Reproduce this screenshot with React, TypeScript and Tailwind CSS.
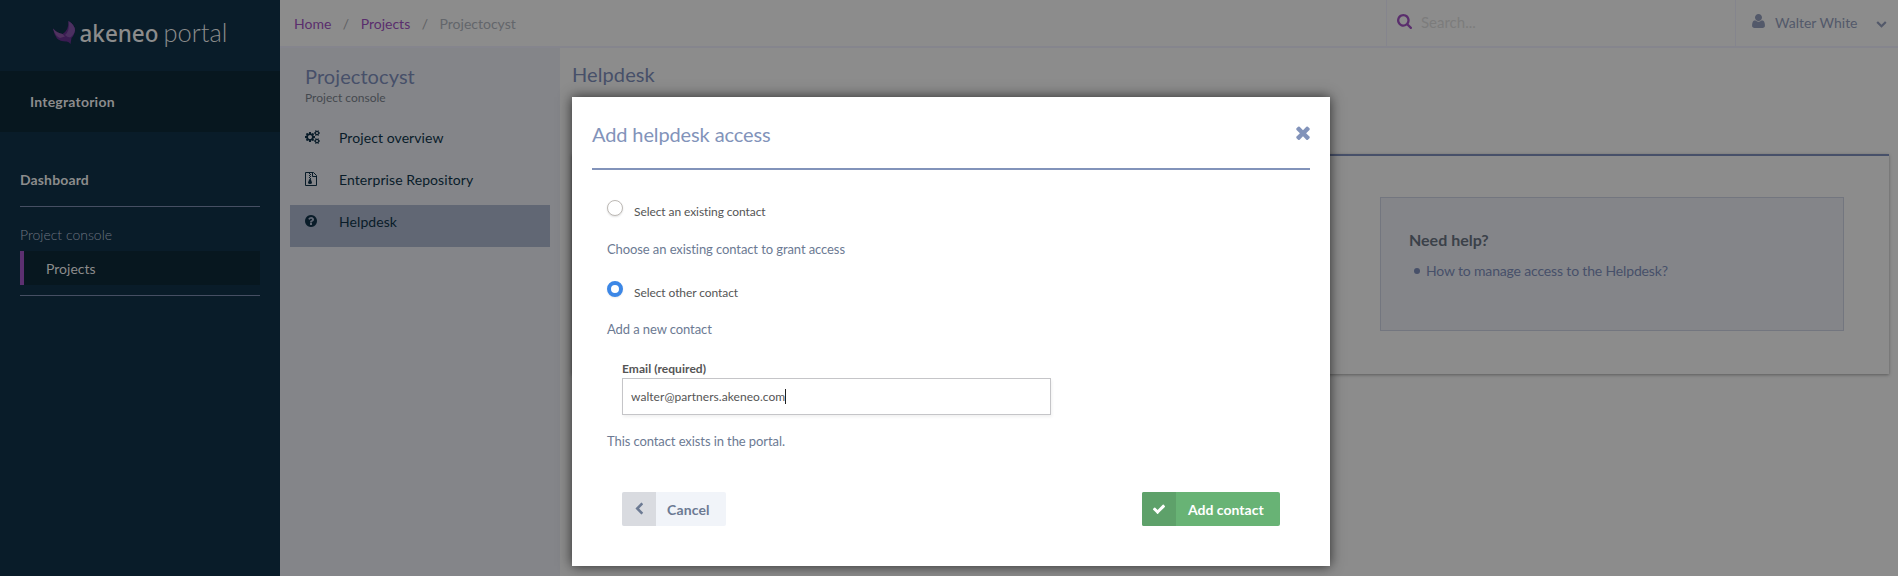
import type { ReactNode } from "react";

const paths = {
  cogs: "M896 896q0-106-75-181t-181-75-181 75-75 181 75 181 181 75 181-75 75-181zm768 512q0-52-38-90t-90-38-90 38-38 90q0 53 37.5 90.5t90.5 37.5 90.5-37.5 37.5-90.5zm0-1024q0-52-38-90t-90-38-90 38-38 90q0 53 37.5 90.5t90.5 37.5 90.5-37.5 37.5-90.5zm-384 421v185q0 10-7 19.5t-16 10.5l-155 24q-11 35-32 76 34 48 90 115 7 11 7 20 0 12-7 19-23 30-82.5 89.5t-78.5 59.5q-11 0-21-7l-115-90q-37 19-77 31-11 108-23 155-7 24-30 24h-186q-11 0-20-7.5t-10-17.5l-23-153q-34-10-75-31l-118 89q-7 7-20 7-11 0-21-8-144-133-144-160 0-9 7-19 10-14 41-53t47-61q-23-44-35-82l-152-24q-10-1-17-9.5t-7-19.5v-185q0-10 7-19.5t16-10.5l155-24q11-35 32-76-34-48-90-115-7-11-7-20 0-12 7-20 22-30 82-89t79-59q11 0 21 7l115 90q34-18 77-32 11-108 23-154 7-24 30-24h186q11 0 20 7.5t10 17.5l23 153q34 10 75 31l118-89q8-7 20-7 11 0 21 8 144 133 144 160 0 8-7 19-12 16-42 54t-45 60q23 48 34 82l152 23q10 2 17 10.5t7 19.5zm640 533v140q0 16-149 31-12 27-30 52 51 113 51 138 0 4-4 7-122 71-124 71-8 0-46-47t-52-68q-20 2-30 2t-30-2q-14 21-52 68t-46 47q-2 0-124-71-4-3-4-7 0-25 51-138-18-25-30-52-149-15-149-31v-140q0-16 149-31 13-29 30-52-51-113-51-138 0-4 4-7 4-2 35-20t59-34 30-16q8 0 46 46.5t52 67.5q20-2 30-2t30 2q51-71 92-112l6-2q4 0 124 70 4 3 4 7 0 25-51 138 17 23 30 52 149 15 149 31zm0-1024v140q0 16-149 31-12 27-30 52 51 113 51 138 0 4-4 7-122 71-124 71-8 0-46-47t-52-68q-20 2-30 2t-30-2q-14 21-52 68t-46 47q-2 0-124-71-4-3-4-7 0-25 51-138-18-25-30-52-149-15-149-31v-140q0-16 149-31 13-29 30-52-51-113-51-138 0-4 4-7 4-2 35-20t59-34 30-16q8 0 46 46.5t52 67.5q20-2 30-2t30 2q51-71 92-112l6-2q4 0 124 70 4 3 4 7 0 25-51 138 17 23 30 52 149 15 149 31z",
  question: "M1024 1376v-192q0-14-9-23t-23-9h-192q-14 0-23 9t-9 23v192q0 14 9 23t23 9h192q14 0 23-9t9-23zm256-672q0-88-55.5-163t-138.5-116-170-41q-243 0-371 213-15 24 8 42l132 100q7 6 19 6 16 0 25-12 53-68 86-92 34-24 86-24 48 0 85.5 26t37.5 59q0 38-20 61t-68 45q-63 28-115.5 86.5t-52.5 125.5v36q0 14 9 23t23 9h192q14 0 23-9t9-23q0-19 21.5-49.5t54.5-49.5q32-18 49-28.5t46-35 44.5-48 28-60.5 12.5-81zm384 192q0 209-103 385.5t-279.5 279.5-385.5 103-385.5-103-279.5-279.5-103-385.5 103-385.5 279.5-279.5 385.5-103 385.5 103 279.5 279.5 103 385.5z",
  search: "M1216 832q0-185-131.5-316.5t-316.5-131.5-316.5 131.5-131.5 316.5 131.5 316.5 316.5 131.5 316.5-131.5 131.5-316.5zm512 832q0 52-38 90t-90 38q-54 0-90-38l-343-342q-179 124-399 124-143 0-273.5-55.5t-225-150-150-225-55.5-273.5 55.5-273.5 150-225 225-150 273.5-55.5 273.5 55.5 225 150 150 225 55.5 273.5q0 220-124 399l343 343q37 37 37 90z",
  user: "M1600 1405q0 120-73 189.5t-194 69.5h-874q-121 0-194-69.5t-73-189.5q0-53 3.5-103.5t14-109 26.5-108.500 43-97.500 62-81 85.500-53.500 111.500-20q9 0 42 21.500t74.500 48 108 48 133.500 21.500 133.500-21.500 108-48 74.500-48 42-21.500q61 0 111.500 20t85.500 53.500 62 81 43 97.500 26.500 108.500 14 109 3.500 103.500zm-320-893q0 159-112.500 271.500t-271.500 112.500-271.500-112.500-112.500-271.500 112.500-271.500 271.500-112.500 271.500 112.500 112.500 271.500z",
  down: "M1683 808l-742 741q-19 19-45 19t-45-19l-742-741q-19-19-19-45.5t19-45.5l166-165q19-19 45-19t45 19l531 531 531-531q19-19 45-19t45 19l166 165q19 19 19 45.5t-19 45.5z",
  left: "M1427 301l-531 531 531 531q19 19 19 45t-19 45l-166 166q-19 19-45 19t-45-19l-742-742q-19-19-19-45t19-45l742-742q19-19 45-19t45 19l166 166q19 19 19 45t-19 45z",
  times: "M1490 1322q0 40-28 68l-136 136q-28 28-68 28t-68-28l-294-294-294 294q-28 28-68 28t-68-28l-136-136q-28-28-28-68t28-68l294-294-294-294q-28-28-28-68t28-68l136-136q28-28 68-28t68 28l294 294 294-294q28-28 68-28t68 28l136 136q28 28 28 68t-28 68l-294 294 294 294q28 28 28 68z",
  check: "M1671 566q0 40-28 68l-724 724-136 136q-28 28-68 28t-68-28l-136-136-362-362q-28-28-28-68t28-68l136-136q28-28 68-28t68 28l294 295 656-657q28-28 68-28t68 28l136 136q28 28 28 68z",
};

function Icon({ d, box, className }: { d: string; box: string; className: string }) {
  return (
    <svg viewBox={box} className={className} fill="currentColor">
      <path d={d} />
    </svg>
  );
}

function Logo() {
  return (
    <svg viewBox="0 0 280 71" className="block h-[71px] w-[280px]">
      <path d="M53 28.500Q57 33 62.500 34Q69 30 68.500 21Q75 25 75 30.500Q74 36 71.500 38L70.500 44Q68.500 41 66 41.500Q60 41.500 57 38.500Q54 34.500 53 28.500Z" fill="#3a1c52" />
      <path d="M68.500 21Q75 25 75 30.500Q74 35 70 37.500Q67 37 65 35Q70 31 68.500 21Z" fill="#4b3060" />
      <path d="M53 28.500Q57 33 62.500 34L65 36.500L60 38Q55 36 53 28.500Z" fill="#50325f" />
      <text x="79.500" y="41.500" fontSize="24" fontWeight="500" textLength="79" lengthAdjust="spacingAndGlyphs" fill="#8c8c8c" className="font-['Noto_Sans',sans-serif]">akeneo</text>
      <text x="163.500" y="41.500" fontSize="25" fontWeight="300" textLength="64" lengthAdjust="spacingAndGlyphs" fill="#8c8c8c" className="font-['Lato',sans-serif]">portal</text>
    </svg>
  );
}

function Sidebar() {
  return (
    <aside className="flex w-[280px] shrink-0 flex-col bg-[#091c29] text-sm text-[#8c8c8c]">
      <Logo />
      <div className="flex h-[61px] items-center bg-[#07171f] pl-[30px] font-bold tracking-[0.22px]">Integratorion</div>
      <nav className="px-5 pt-[38px]">
        <div className="h-[37px] border-b border-[#464f63] leading-5 font-bold tracking-[0.13px]">Dashboard</div>
        <div className="mt-[18px] leading-5 font-light text-[#6d7480]">Project console</div>
        <div className="mt-[6px] h-[34px] border-l-4 border-[#5c3070] bg-[#07171f] pl-[22px] leading-[36px]">Projects</div>
        <div className="mt-[10px] border-b border-[#464f63]" />
      </nav>
    </aside>
  );
}

function TopBar() {
  return (
    <header className="flex h-12 shrink-0 border-b-2 border-[#85858d] text-sm">
      <div className="flex flex-1 pt-[14px] pl-[14px] leading-5 text-[#5a2e6d]">
        <span>Home</span>
        <span className="mx-[11.5px] text-[#5f6063]">/</span>
        <span>Projects</span>
        <span className="mx-[11.5px] text-[#5f6063]">/</span>
        <span className="text-[#63666b]">Projectocyst</span>
      </div>
      <div className="flex w-[349px] border-l border-[#85858d] pl-[10px]">
        <Icon d={paths.search} box="64 128 1664 1664" className="mt-[14px] size-[15px] text-[#5a2e6d]" />
        <span className="mt-[12px] ml-[9px] text-[15px] leading-5 text-[#7c7c7c]">Search...</span>
      </div>
      <div className="flex w-[163px] border-l border-[#85858d] pl-4 text-[#53596a]">
        <Icon d={paths.user} box="192 128 1408 1536" className="mt-[14px] h-[14px] w-[13px]" />
        <span className="mt-[13px] ml-[10px] leading-5">Walter White</span>
        <Icon d={paths.down} box="0 0 1792 1792" className="mt-[18px] ml-[18px] size-[11px]" />
      </div>
    </header>
  );
}

function MenuItem({ icon, label, active = false }: { icon: ReactNode; label: string; active?: boolean }) {
  return (
    <div className={active ? "flex h-[42px] bg-[#616774] pl-[15px]" : "flex h-[42px] pl-[15px]"}>
      <span className={active ? "w-[34px] pt-[10px]" : "w-[34px] pt-[9px]"}>{icon}</span>
      <span className="pt-[7px] leading-5 tracking-[0.08px]">{label}</span>
    </div>
  );
}

function ProjectMenu() {
  return (
    <section className="w-[280px] shrink-0 bg-[#848589] px-[10px] pt-[14px] text-sm text-[#091c29]">
      <h2 className="pl-[15px] text-xl leading-7 tracking-[0.08px] text-[#475069]">Projectocyst</h2>
      <p className="pl-[15px] text-xs leading-4 text-[#44494f]">Project console</p>
      <div className="mt-[15px]">
        <MenuItem icon={<Icon d={paths.cogs} box="0 0 1920 1792" className="h-[14px] w-[15px]" />} label="Project overview" />
        <MenuItem
          icon={
            <svg viewBox="0 0 12 14" className="h-[14px] w-3" fill="none" stroke="currentColor">
              <path d="M.5.5h8l3 3v10H.5zM7.500.5v4h4" />
              <path d="M4 1.500h1M5 2.500h1M4 3.500h1M5 4.500h1M4 5.500h1M5 6.500h1" />
              <path d="M4.500 7h1.200l1.300 3.500q0 1.500-2 1.500t-2-1.500z" fill="currentColor" stroke="none" />
            </svg>
          }
          label="Enterprise Repository"
        />
        <MenuItem active icon={<Icon d={paths.question} box="128 128 1536 1536" className="size-3" />} label="Helpdesk" />
      </div>
    </section>
  );
}

function HelpCard() {
  return (
    <div className="mt-[66px] flex h-[220px] justify-end border-t-2 border-[#475069] pt-[41px] pr-[45px] shadow-[0_1px_3px_rgba(0,0,0,0.35)]">
      <div className="h-[134px] w-[464px] border border-[#73767f] bg-[#848589] pt-[30px] pl-[28px]">
        <h3 className="text-base leading-6 font-bold text-[#3b4149]">Need help?</h3>
        <ul className="mt-[9px] text-sm leading-5 tracking-[-0.16px] text-[#475069]">
          <li className="flex items-center">
            <span className="mr-[6px] ml-[5px] size-[6px] rounded-full bg-[#475069]" />
            How to manage access to the Helpdesk?
          </li>
        </ul>
      </div>
    </div>
  );
}

function Radio({ label, checked = false }: { label: string; checked?: boolean }) {
  return (
    <label className="flex h-6 text-xs tracking-[-0.08px] text-[#555]">
      <span
        className={
          checked
            ? "size-4 rounded-full border-4 border-[#3c87e6] bg-white shadow-[0_1px_2px_rgba(0,0,0,0.08)]"
            : "size-4 rounded-full border border-[#bdb9b5] bg-white shadow-[0_1px_2px_rgba(0,0,0,0.12)]"
        }
      />
      <span className="ml-[11px] pt-[4px] leading-4">{label}</span>
    </label>
  );
}

function Modal() {
  return (
    <div className="absolute top-[97px] left-[572px] h-[469px] w-[758px] bg-white px-5 text-[13px] text-[#6c7a93] shadow-[0_0_12px_rgba(0,0,0,0.7)]">
      <div className="flex h-[73px] justify-between border-b-2 border-[#8293ba] text-[#8293ba]">
        <h1 className="pt-[23px] text-xl leading-7 tracking-[-0.12px]">Add helpdesk access</h1>
        <Icon d={paths.times} box="302 238 1188 1316" className="mt-[28px] h-[15px] w-[14px]" />
      </div>
      <div className="pt-[30px] pl-[15px] tracking-[-0.09px]">
        <Radio label="Select an existing contact" />
        <p className="mt-[15px] leading-5">Choose an existing contact to grant access</p>
        <div className="mt-[22px]">
          <Radio label="Select other contact" checked />
        </div>
        <p className="mt-[14px] leading-5">Add a new contact</p>
        <div className="mt-[22px] pl-[15px] text-xs tracking-[0.05px]">
          <div className="h-[17px] leading-4 font-bold text-[#555]">Email (required)</div>
          <div className="flex h-[37px] w-[429px] items-center border border-[#c5c5c8] pl-[8px] text-[#555] shadow-[1px_2px_3px_rgba(0,0,0,0.06)]">
            walter@partners.akeneo.com
            <span className="h-[15px] w-px bg-[#222]" />
          </div>
        </div>
        <p className="mt-[16px] leading-5">This contact exists in the portal.</p>
      </div>
      <div className="mt-[41px] flex justify-between pr-[30px] pl-[30px] text-sm font-bold">
        <button className="flex h-[34px] w-[104px] overflow-hidden rounded-[2px] bg-[#f1f4f9] text-left">
          <span className="flex h-[34px] w-[34px] justify-center bg-[#d9dbe0] pt-[10px]">
            <Icon d={paths.left} box="200 0 1366 1664" className="h-[13px] w-[10px]" />
          </span>
          <span className="pl-[11px] leading-[36px] tracking-[0.15px]">Cancel</span>
        </button>
        <button className="flex h-[34px] w-[138px] overflow-hidden rounded-[2px] bg-[#68b375] text-left text-white">
          <span className="flex h-[34px] w-[34px] justify-center bg-[#5ea16a] pt-[10px]">
            <Icon d={paths.check} box="0 0 1792 1792" className="size-[14px]" />
          </span>
          <span className="pl-[12px] leading-[36px]">Add contact</span>
        </button>
      </div>
    </div>
  );
}

export default function App() {
  return (
    <div className="relative flex h-[576px] w-[1898px] overflow-hidden bg-[#8c8c8c] font-['Lato',sans-serif]">
      <Sidebar />
      <div className="flex min-w-0 flex-1 flex-col">
        <TopBar />
        <div className="flex flex-1">
          <ProjectMenu />
          <main className="flex-1 pt-[12px] pr-[9px] pl-3">
            <h2 className="text-xl leading-7 tracking-[0.1px] text-[#475069]">Helpdesk</h2>
            <HelpCard />
          </main>
        </div>
      </div>
      <Modal />
    </div>
  );
}
